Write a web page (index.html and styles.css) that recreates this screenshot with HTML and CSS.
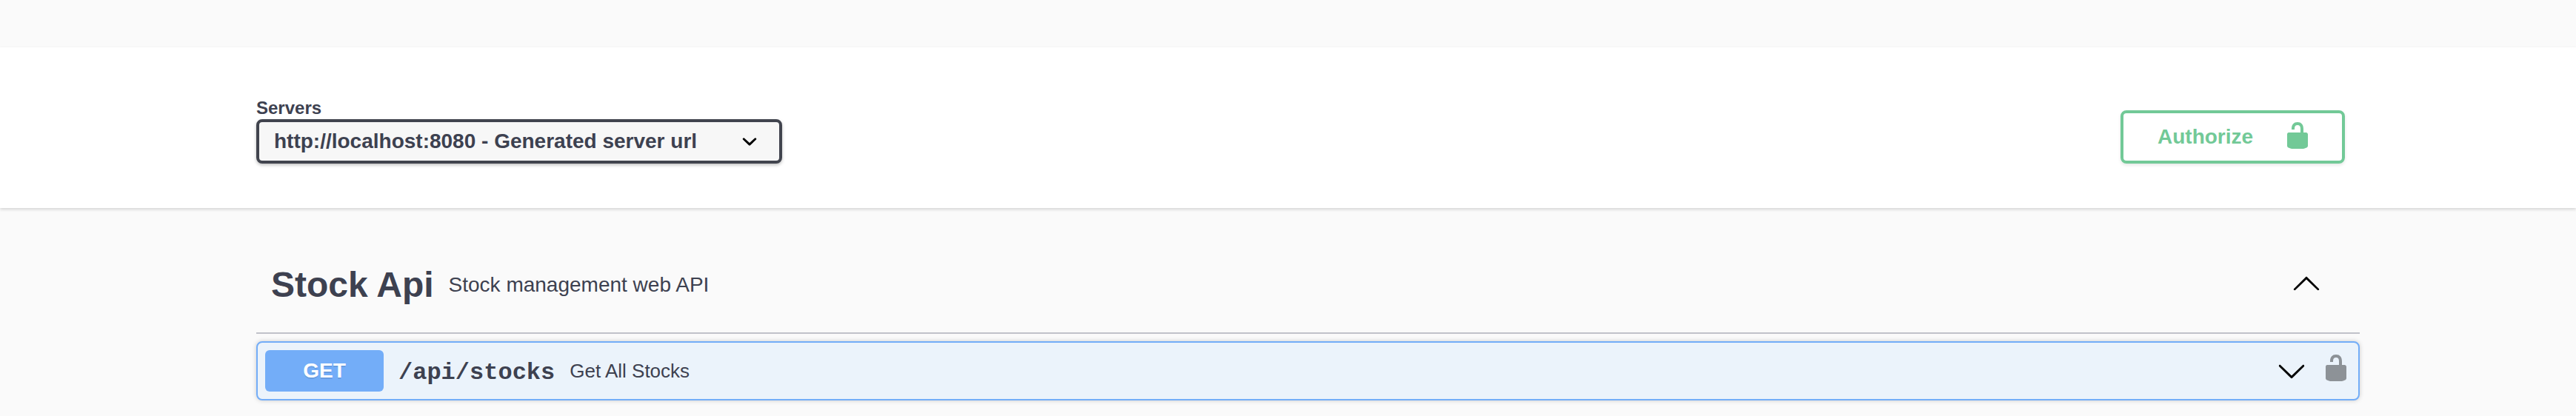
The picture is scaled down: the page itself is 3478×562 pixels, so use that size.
FILE: index.html
```html
<!DOCTYPE html>
<html lang="en">
<head>
<meta charset="utf-8">
<title>Stock Api</title>
<link rel="stylesheet" href="styles.css">
</head>
<body>
<section class="scheme">
  <div class="scheme-inner">
    <div class="servers">
      <span class="servers-label">Servers</span>
      <div class="select">
        <span>http://localhost:8080 - Generated server url</span>
        <svg class="icon" viewBox="0 0 20 20"><path d="M13.418 7.859a.695.695 0 01.978 0 .68.68 0 010 .969l-3.908 3.83a.697.697 0 01-.979 0l-3.908-3.83a.68.68 0 010-.969.695.695 0 01.978 0L10 11l3.418-3.141z"/></svg>
      </div>
    </div>
    <button class="authorize">
      <span class="authorize-label">Authorize</span>
      <svg class="icon" viewBox="0 0 20 20"><path d="M15.8 8H14V5.6C14 2.703 12.665 1 10 1 7.334 1 6 2.703 6 5.6V6h2v-.801C8 3.754 8.797 3 10 3c1.203 0 2 .754 2 2.199V8H4c-.553 0-1 .646-1 1.199V17c0 .549.428 1.139.951 1.307l1.197.387C5.672 18.861 6.55 19 7.1 19h5.8c.549 0 1.428-.139 1.951-.307l1.196-.387c.524-.167.953-.757.953-1.306V9.199C17 8.646 16.352 8 15.8 8z"/></svg>
    </button>
  </div>
</section>
<main class="operations">
  <header class="tag">
    <h3 class="tag-name">Stock Api</h3>
    <p class="tag-description">Stock management web API</p>
    <svg class="icon tag-toggle" viewBox="0 0 20 20"><path d="M17.418 14.908c.272.268.709.268.979 0s.271-.701 0-.969l-7.908-7.83c-.27-.268-.707-.268-.979 0l-7.908 7.83c-.27.268-.27.701 0 .969.271.268.709.268.979 0L10 7.767z"/></svg>
  </header>
  <div class="opblock">
    <span class="method">GET</span>
    <span class="path">/api/stocks</span>
    <span class="summary">Get All Stocks</span>
    <svg class="icon" viewBox="0 0 20 20"><path d="M17.418 6.109c.272-.268.709-.268.979 0s.271.701 0 .969l-7.908 7.83c-.27.268-.707.268-.979 0l-7.908-7.83c-.27-.268-.27-.701 0-.969.271-.268.709-.268.979 0L10 13.25z"/></svg>
    <svg class="icon lock" viewBox="0 0 20 20"><path d="M15.8 8H14V5.6C14 2.703 12.665 1 10 1 7.334 1 6 2.703 6 5.6V6h2v-.801C8 3.754 8.797 3 10 3c1.203 0 2 .754 2 2.199V8H4c-.553 0-1 .646-1 1.199V17c0 .549.428 1.139.951 1.307l1.197.387C5.672 18.861 6.55 19 7.1 19h5.8c.549 0 1.428-.139 1.951-.307l1.196-.387c.524-.167.953-.757.953-1.306V9.199C17 8.646 16.352 8 15.8 8z"/></svg>
  </div>
</main>
</body>
</html>
```
FILE: styles.css
```css
* { box-sizing: border-box; }

body {
  margin: 0;
  padding-top: 64px;
  height: 562px;
  overflow: hidden;
  background: #fafafa;
  color: #3d4150;
  font-family: "Liberation Sans", Arial, sans-serif;
}

.icon {
  display: block;
  flex: none;
  width: 40px;
  height: 40px;
}

.scheme {
  height: 217px;
  background: #fff;
  box-shadow: 0 2px 4px rgba(0, 0, 0, .15);
}

.scheme-inner {
  display: flex;
  justify-content: space-between;
  align-items: flex-end;
  height: 157px;
  padding: 0 312px 0 346px;
}

.servers {
  display: flex;
  flex-direction: column;
}

.servers-label {
  margin-bottom: 1px;
  font-size: 24px;
  font-weight: 700;
  line-height: 28px;
}

.select {
  display: flex;
  align-items: center;
  justify-content: space-between;
  width: 710px;
  height: 60px;
  padding: 0 20px;
  border: 4px solid #41444e;
  border-radius: 8px;
  background: #f7f7f7;
  box-shadow: 0 2px 4px rgba(0, 0, 0, .25);
  font-size: 28px;
  font-weight: 700;
}

.authorize {
  display: flex;
  align-items: center;
  justify-content: space-between;
  width: 303px;
  height: 72px;
  padding: 0 40px 4px 46px;
  border: 4px solid #72c997;
  border-radius: 8px;
  background: transparent;
  box-shadow: 0 2px 4px rgba(0, 0, 0, .1);
  color: #72c997;
  font: 700 28px/32px "Liberation Sans", Arial, sans-serif;
}

.authorize-label { padding-top: 4px; }

.authorize .icon { fill: currentColor; }

.operations {
  width: 2840px;
  margin: 0 0 0 346px;
  padding-top: 40px;
}

.tag {
  display: flex;
  align-items: center;
  height: 130px;
  padding: 0 52px 0 20px;
  border-bottom: 2px solid #c0c2c9;
}

.tag-name {
  margin: 0;
  font-size: 48px;
  line-height: 56px;
}

.tag-description {
  flex: 1;
  margin: 0 0 0 20px;
  font-size: 28px;
  line-height: 32px;
}

.tag-toggle { margin-bottom: 6px; }

.opblock {
  display: flex;
  align-items: center;
  height: 80px;
  margin-top: 10px;
  padding: 0 10px;
  border: 2px solid #73adf8;
  border-radius: 8px;
  background: #ebf3fb;
  box-shadow: 0 0 6px rgba(0, 0, 0, .19);
}

.method {
  width: 160px;
  height: 56px;
  border-radius: 6px;
  background: #73adf8;
  color: #fff;
  font-size: 28px;
  font-weight: 700;
  line-height: 56px;
  text-align: center;
  text-shadow: 0 2px 0 rgba(0, 0, 0, .1);
}

.path {
  padding: 4px 20px 0;
  font-family: "Liberation Mono", "Courier New", monospace;
  font-size: 32px;
  font-weight: 700;
}

.summary {
  flex: 1;
  font-size: 26px;
}

.lock {
  margin: 0 0 8px 20px;
  fill: #8d9297;
}
```
